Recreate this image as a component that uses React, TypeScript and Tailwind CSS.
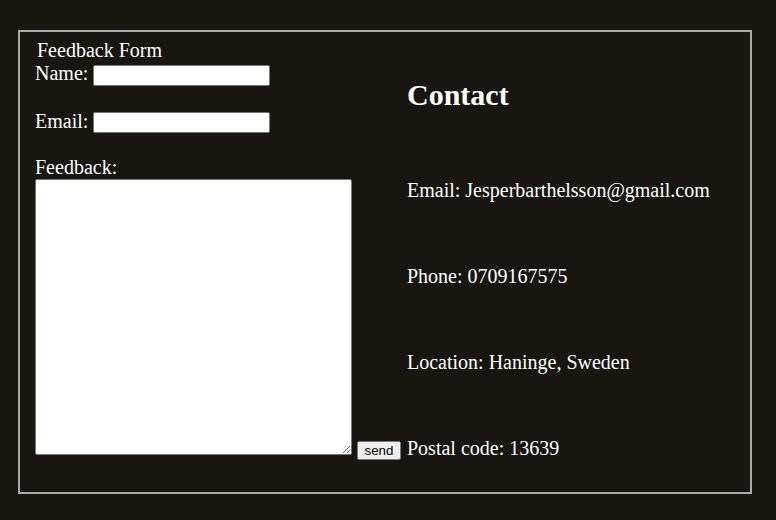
export default function App() {
  return (
    <div className="min-h-screen bg-[#191511] pt-[30px] pl-[18px] font-['Liberation_Serif',serif] text-[20px] leading-[23px] text-white">
      <div className="flex h-[464px] w-[734px] items-end gap-[6px] border-2 border-[#a9a9a9] pb-[32px] pl-[15px]">
        {/* form side */}
        <form className="flex flex-col" onSubmit={(e) => e.preventDefault()}>
          <div className="pl-[2px]">Feedback Form</div>
          <div className="flex h-[25px]">
            <label>Name:</label>
            <input
              type="text"
              className="ml-[5px] mt-[3px] h-[21px] w-[177px] rounded-[2px] border border-[#767676] bg-white text-black"
            />
          </div>
          <div className="h-[23px]" />
          <div className="flex h-[23px]">
            <label>Email:</label>
            <input
              type="email"
              className="ml-[5px] mt-[2px] h-[21px] w-[177px] rounded-[2px] border border-[#767676] bg-white text-black"
            />
          </div>
          <div className="h-[23px]" />
          <div>Feedback:</div>
          <div className="flex items-end">
            <textarea className="mb-[5px] h-[276px] w-[317px] resize rounded-[2px] border border-[#767676] bg-white text-black" />
            <button
              type="submit"
              className="ml-[5px] h-[19px] w-[44px] rounded-[2px] border border-[#767676] bg-[#efefef] font-['Liberation_Sans',sans-serif] text-[13.33px] leading-[15px] text-black"
            >
              send
            </button>
          </div>
        </form>

        {/* contact side */}
        <div className="flex flex-col">
          <h2 className="text-[30px] font-bold leading-[34px]">Contact</h2>
          <p className="mt-[67px]">Email: Jesperbarthelsson@gmail.com</p>
          <p className="mt-[63px]">Phone: 0709167575</p>
          <p className="mt-[63px]">Location: Haninge, Sweden</p>
          <p className="mt-[63px]">Postal code: 13639</p>
        </div>
      </div>
    </div>
  );
}
